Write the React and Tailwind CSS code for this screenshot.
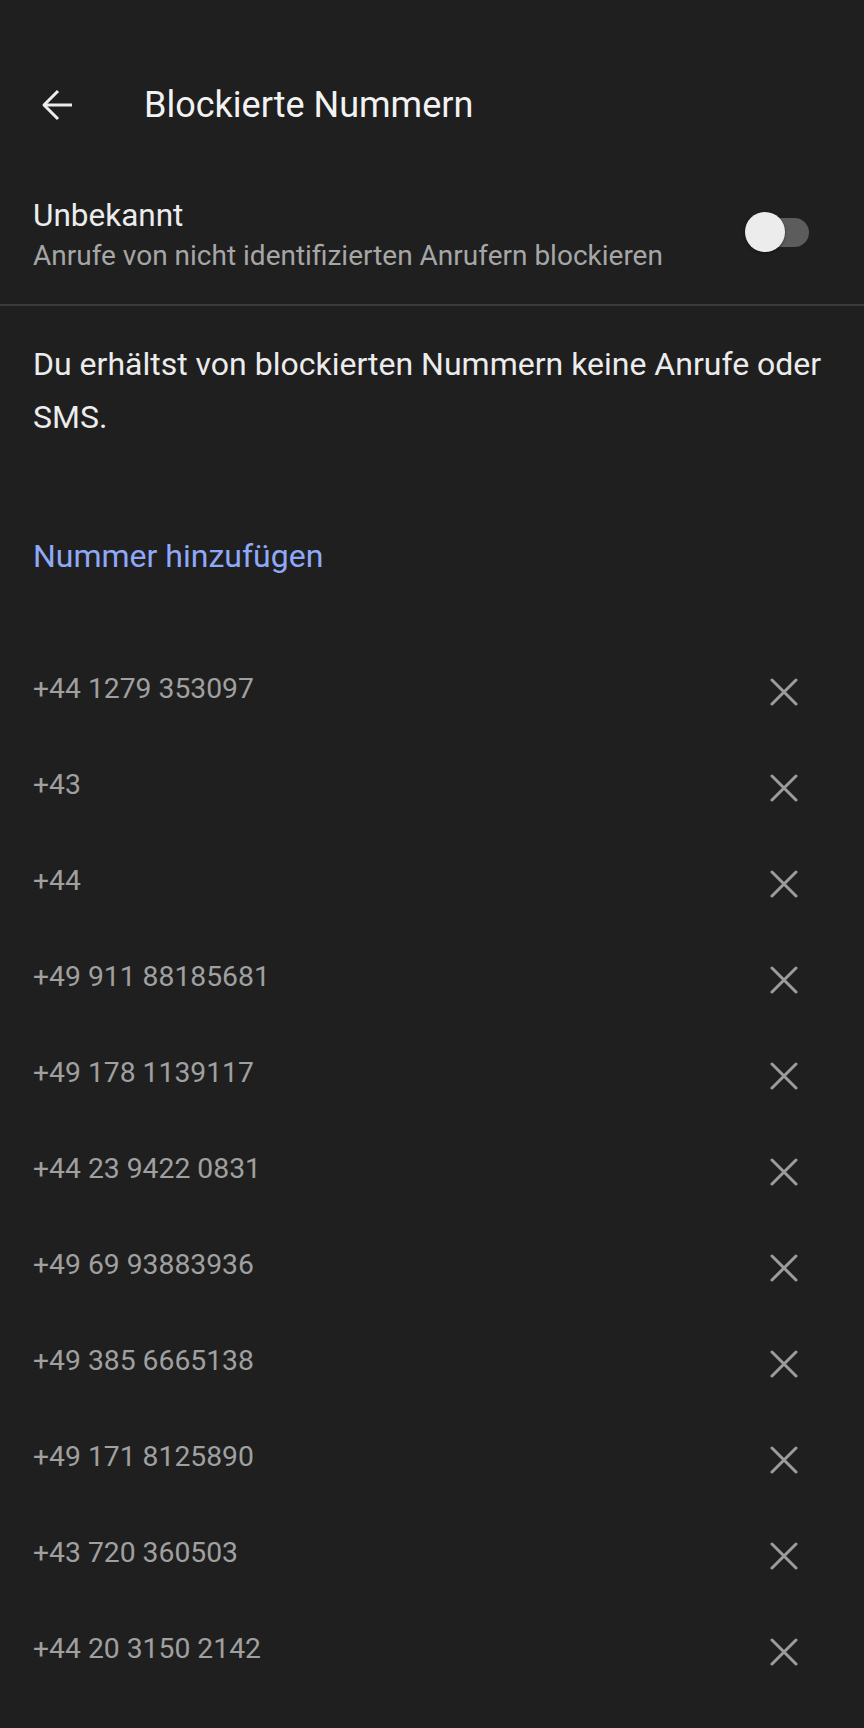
import React from "react";

const numbers = [
  "+44 1279 353097",
  "+43",
  "+44",
  "+49 911 88185681",
  "+49 178 1139117",
  "+44 23 9422 0831",
  "+49 69 93883936",
  "+49 385 6665138",
  "+49 171 8125890",
  "+43 720 360503",
  "+44 20 3150 2142",
];

function BackArrow() {
  return (
    <svg width="32" height="32" viewBox="0 0 32 32" fill="none" stroke="#ededed" strokeWidth="3" strokeLinejoin="round">
      <path d="M31 16H3" />
      <path d="M17 2L3 16l14 14" />
    </svg>
  );
}

function CloseIcon() {
  return (
    <svg width="28" height="28" viewBox="0 0 28 28" fill="none" stroke="#9c9c9c" strokeWidth="3" strokeLinecap="round">
      <path d="M2 2l24 24M26 2L2 26" />
    </svg>
  );
}

function Toggle() {
  // off state: thumb left, track grey
  return (
    <div className="relative w-[64px] h-[40px] mb-[8px] shrink-0">
      <div className="absolute right-0 top-[5.5px] w-[54px] h-[29px] rounded-full bg-[#5c5c5c]" />
      <div className="absolute left-0 top-0 w-[40px] h-[40px] rounded-full bg-[#ececec] shadow-[0_1px_3px_rgba(0,0,0,0.4)]" />
    </div>
  );
}

export default function App() {
  return (
    <div className="min-h-[1728px] w-[864px] bg-[#1f1f1f] font-['Roboto',sans-serif] text-[#eeeeee]">
      {/* header */}
      <div className="pt-[57px]">
        <div className="flex items-center h-[96px] pl-[41px]">
          <BackArrow />
          <span className="ml-[71px] text-[36px] leading-[48px] text-[#f2f2f2]">Blockierte Nummern</span>
        </div>
      </div>

      {/* unknown callers */}
      <div className="flex items-center justify-between pl-[33px] pr-[55px] pt-[43px] pb-[28px]">
        <div className="flex flex-col">
          <span className="text-[31.5px] leading-[40px] text-[#ececec]">Unbekannt</span>
          <span className="text-[28px] leading-[40px] text-[#a6a6a6]">Anrufe von nicht identifizierten Anrufern blockieren</span>
        </div>
        <Toggle />
      </div>
      <div className="h-[2px] bg-[#3b3b3b]" />

      <p className="pl-[33px] pr-[12px] pt-[32px] text-[32px] leading-[53px] text-[#ececec]">
        Du erhältst von blockierten Nummern keine Anrufe oder SMS.
      </p>

      <div className="pl-[33px] pt-[92px] text-[32px] leading-[40px] text-[#8fa9f8]">Nummer hinzufügen</div>

      <div className="pt-[63px] flex flex-col">
        {numbers.map((n, i) => (
          <div key={i} className="flex items-center justify-between h-[96px] pl-[33px] pr-[66px]">
            <span className="mt-[4px] text-[28.3px] leading-[40px] text-[#a0a0a0]">{n}</span>
            <div className="mt-[9px]">
              <CloseIcon />
            </div>
          </div>
        ))}
      </div>
    </div>
  );
}
